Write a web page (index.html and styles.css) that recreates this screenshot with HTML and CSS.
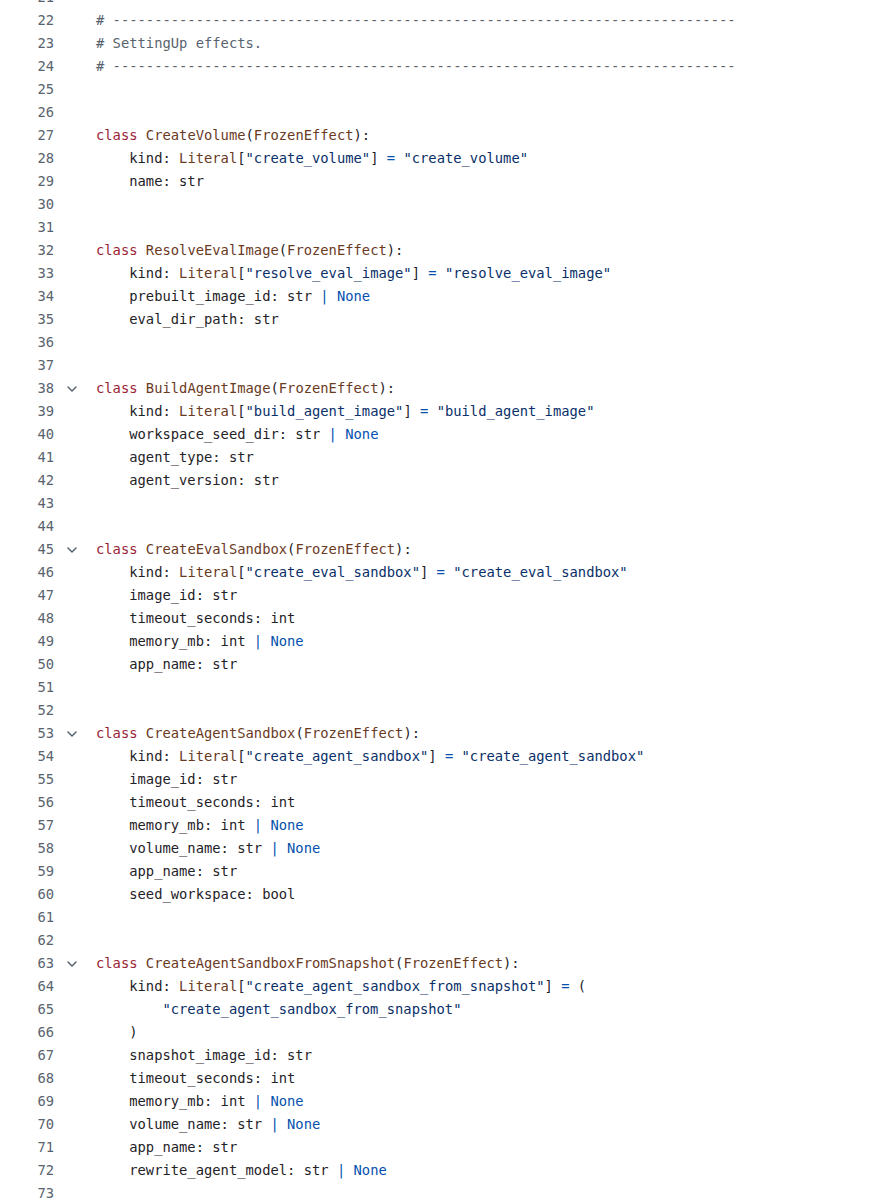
FILE: index.html
```html
<!DOCTYPE html>
<html lang="en">
<head>
<meta charset="utf-8">
<title>effects.py</title>
<link rel="stylesheet" href="styles.css">
</head>
<body>
<div class="code">
<div class="row"><span class="ln">21</span><span class="fold"></span><span class="src"></span></div>
<div class="row"><span class="ln">22</span><span class="fold"></span><span class="src"><span class="cm"># ---------------------------------------------------------------------------</span></span></div>
<div class="row"><span class="ln">23</span><span class="fold"></span><span class="src"><span class="cm"># SettingUp effects.</span></span></div>
<div class="row"><span class="ln">24</span><span class="fold"></span><span class="src"><span class="cm"># ---------------------------------------------------------------------------</span></span></div>
<div class="row"><span class="ln">25</span><span class="fold"></span><span class="src"></span></div>
<div class="row"><span class="ln">26</span><span class="fold"></span><span class="src"></span></div>
<div class="row"><span class="ln">27</span><span class="fold"></span><span class="src"><span class="k">class</span> <span class="t">CreateVolume</span>(<span class="t">FrozenEffect</span>):</span></div>
<div class="row"><span class="ln">28</span><span class="fold"></span><span class="src">    kind: <span class="t">Literal</span>[<span class="s">"create_volume"</span>] <span class="c">=</span> <span class="s">"create_volume"</span></span></div>
<div class="row"><span class="ln">29</span><span class="fold"></span><span class="src">    name: str</span></div>
<div class="row"><span class="ln">30</span><span class="fold"></span><span class="src"></span></div>
<div class="row"><span class="ln">31</span><span class="fold"></span><span class="src"></span></div>
<div class="row"><span class="ln">32</span><span class="fold"></span><span class="src"><span class="k">class</span> <span class="t">ResolveEvalImage</span>(<span class="t">FrozenEffect</span>):</span></div>
<div class="row"><span class="ln">33</span><span class="fold"></span><span class="src">    kind: <span class="t">Literal</span>[<span class="s">"resolve_eval_image"</span>] <span class="c">=</span> <span class="s">"resolve_eval_image"</span></span></div>
<div class="row"><span class="ln">34</span><span class="fold"></span><span class="src">    prebuilt_image_id: str <span class="c">|</span> <span class="c">None</span></span></div>
<div class="row"><span class="ln">35</span><span class="fold"></span><span class="src">    eval_dir_path: str</span></div>
<div class="row"><span class="ln">36</span><span class="fold"></span><span class="src"></span></div>
<div class="row"><span class="ln">37</span><span class="fold"></span><span class="src"></span></div>
<div class="row"><span class="ln">38</span><span class="fold"><svg class="chev" viewBox="0 0 10 6"><path d="M1 1l4 4 4-4"/></svg></span><span class="src"><span class="k">class</span> <span class="t">BuildAgentImage</span>(<span class="t">FrozenEffect</span>):</span></div>
<div class="row"><span class="ln">39</span><span class="fold"></span><span class="src">    kind: <span class="t">Literal</span>[<span class="s">"build_agent_image"</span>] <span class="c">=</span> <span class="s">"build_agent_image"</span></span></div>
<div class="row"><span class="ln">40</span><span class="fold"></span><span class="src">    workspace_seed_dir: str <span class="c">|</span> <span class="c">None</span></span></div>
<div class="row"><span class="ln">41</span><span class="fold"></span><span class="src">    agent_type: str</span></div>
<div class="row"><span class="ln">42</span><span class="fold"></span><span class="src">    agent_version: str</span></div>
<div class="row"><span class="ln">43</span><span class="fold"></span><span class="src"></span></div>
<div class="row"><span class="ln">44</span><span class="fold"></span><span class="src"></span></div>
<div class="row"><span class="ln">45</span><span class="fold"><svg class="chev" viewBox="0 0 10 6"><path d="M1 1l4 4 4-4"/></svg></span><span class="src"><span class="k">class</span> <span class="t">CreateEvalSandbox</span>(<span class="t">FrozenEffect</span>):</span></div>
<div class="row"><span class="ln">46</span><span class="fold"></span><span class="src">    kind: <span class="t">Literal</span>[<span class="s">"create_eval_sandbox"</span>] <span class="c">=</span> <span class="s">"create_eval_sandbox"</span></span></div>
<div class="row"><span class="ln">47</span><span class="fold"></span><span class="src">    image_id: str</span></div>
<div class="row"><span class="ln">48</span><span class="fold"></span><span class="src">    timeout_seconds: int</span></div>
<div class="row"><span class="ln">49</span><span class="fold"></span><span class="src">    memory_mb: int <span class="c">|</span> <span class="c">None</span></span></div>
<div class="row"><span class="ln">50</span><span class="fold"></span><span class="src">    app_name: str</span></div>
<div class="row"><span class="ln">51</span><span class="fold"></span><span class="src"></span></div>
<div class="row"><span class="ln">52</span><span class="fold"></span><span class="src"></span></div>
<div class="row"><span class="ln">53</span><span class="fold"><svg class="chev" viewBox="0 0 10 6"><path d="M1 1l4 4 4-4"/></svg></span><span class="src"><span class="k">class</span> <span class="t">CreateAgentSandbox</span>(<span class="t">FrozenEffect</span>):</span></div>
<div class="row"><span class="ln">54</span><span class="fold"></span><span class="src">    kind: <span class="t">Literal</span>[<span class="s">"create_agent_sandbox"</span>] <span class="c">=</span> <span class="s">"create_agent_sandbox"</span></span></div>
<div class="row"><span class="ln">55</span><span class="fold"></span><span class="src">    image_id: str</span></div>
<div class="row"><span class="ln">56</span><span class="fold"></span><span class="src">    timeout_seconds: int</span></div>
<div class="row"><span class="ln">57</span><span class="fold"></span><span class="src">    memory_mb: int <span class="c">|</span> <span class="c">None</span></span></div>
<div class="row"><span class="ln">58</span><span class="fold"></span><span class="src">    volume_name: str <span class="c">|</span> <span class="c">None</span></span></div>
<div class="row"><span class="ln">59</span><span class="fold"></span><span class="src">    app_name: str</span></div>
<div class="row"><span class="ln">60</span><span class="fold"></span><span class="src">    seed_workspace: bool</span></div>
<div class="row"><span class="ln">61</span><span class="fold"></span><span class="src"></span></div>
<div class="row"><span class="ln">62</span><span class="fold"></span><span class="src"></span></div>
<div class="row"><span class="ln">63</span><span class="fold"><svg class="chev" viewBox="0 0 10 6"><path d="M1 1l4 4 4-4"/></svg></span><span class="src"><span class="k">class</span> <span class="t">CreateAgentSandboxFromSnapshot</span>(<span class="t">FrozenEffect</span>):</span></div>
<div class="row"><span class="ln">64</span><span class="fold"></span><span class="src">    kind: <span class="t">Literal</span>[<span class="s">"create_agent_sandbox_from_snapshot"</span>] <span class="c">=</span> (</span></div>
<div class="row"><span class="ln">65</span><span class="fold"></span><span class="src">        <span class="s">"create_agent_sandbox_from_snapshot"</span></span></div>
<div class="row"><span class="ln">66</span><span class="fold"></span><span class="src">    )</span></div>
<div class="row"><span class="ln">67</span><span class="fold"></span><span class="src">    snapshot_image_id: str</span></div>
<div class="row"><span class="ln">68</span><span class="fold"></span><span class="src">    timeout_seconds: int</span></div>
<div class="row"><span class="ln">69</span><span class="fold"></span><span class="src">    memory_mb: int <span class="c">|</span> <span class="c">None</span></span></div>
<div class="row"><span class="ln">70</span><span class="fold"></span><span class="src">    volume_name: str <span class="c">|</span> <span class="c">None</span></span></div>
<div class="row"><span class="ln">71</span><span class="fold"></span><span class="src">    app_name: str</span></div>
<div class="row"><span class="ln">72</span><span class="fold"></span><span class="src">    rewrite_agent_model: str <span class="c">|</span> <span class="c">None</span></span></div>
<div class="row"><span class="ln">73</span><span class="fold"></span><span class="src"></span></div>
</div>
</body>
</html>
```

FILE: styles.css
```css
html, body {
  margin: 0;
  padding: 0;
  background: #ffffff;
}

body {
  overflow: hidden;
}

.code {
  margin-top: -14px;
  font-family: "DejaVu Sans Mono", "Liberation Mono", monospace;
  font-size: 13.8px;
  line-height: 23px;
  color: #1f2328;
}

.row {
  display: grid;
  grid-template-columns: 54px 42px 1fr;
  height: 23px;
}

.ln {
  text-align: right;
  color: #59636e;
}

.fold {
  display: flex;
  align-items: center;
  padding-left: 13px;
}

.chev {
  width: 10px;
  height: 6px;
  fill: none;
  stroke: #59636e;
  stroke-width: 1.5;
  stroke-linecap: round;
  stroke-linejoin: round;
}

.src {
  white-space: pre;
}

.k { color: #9a2536; }
.t { color: #6b3a1f; }
.s { color: #0a3069; }
.c { color: #0550ae; }
.cm { color: #59636e; }
```
